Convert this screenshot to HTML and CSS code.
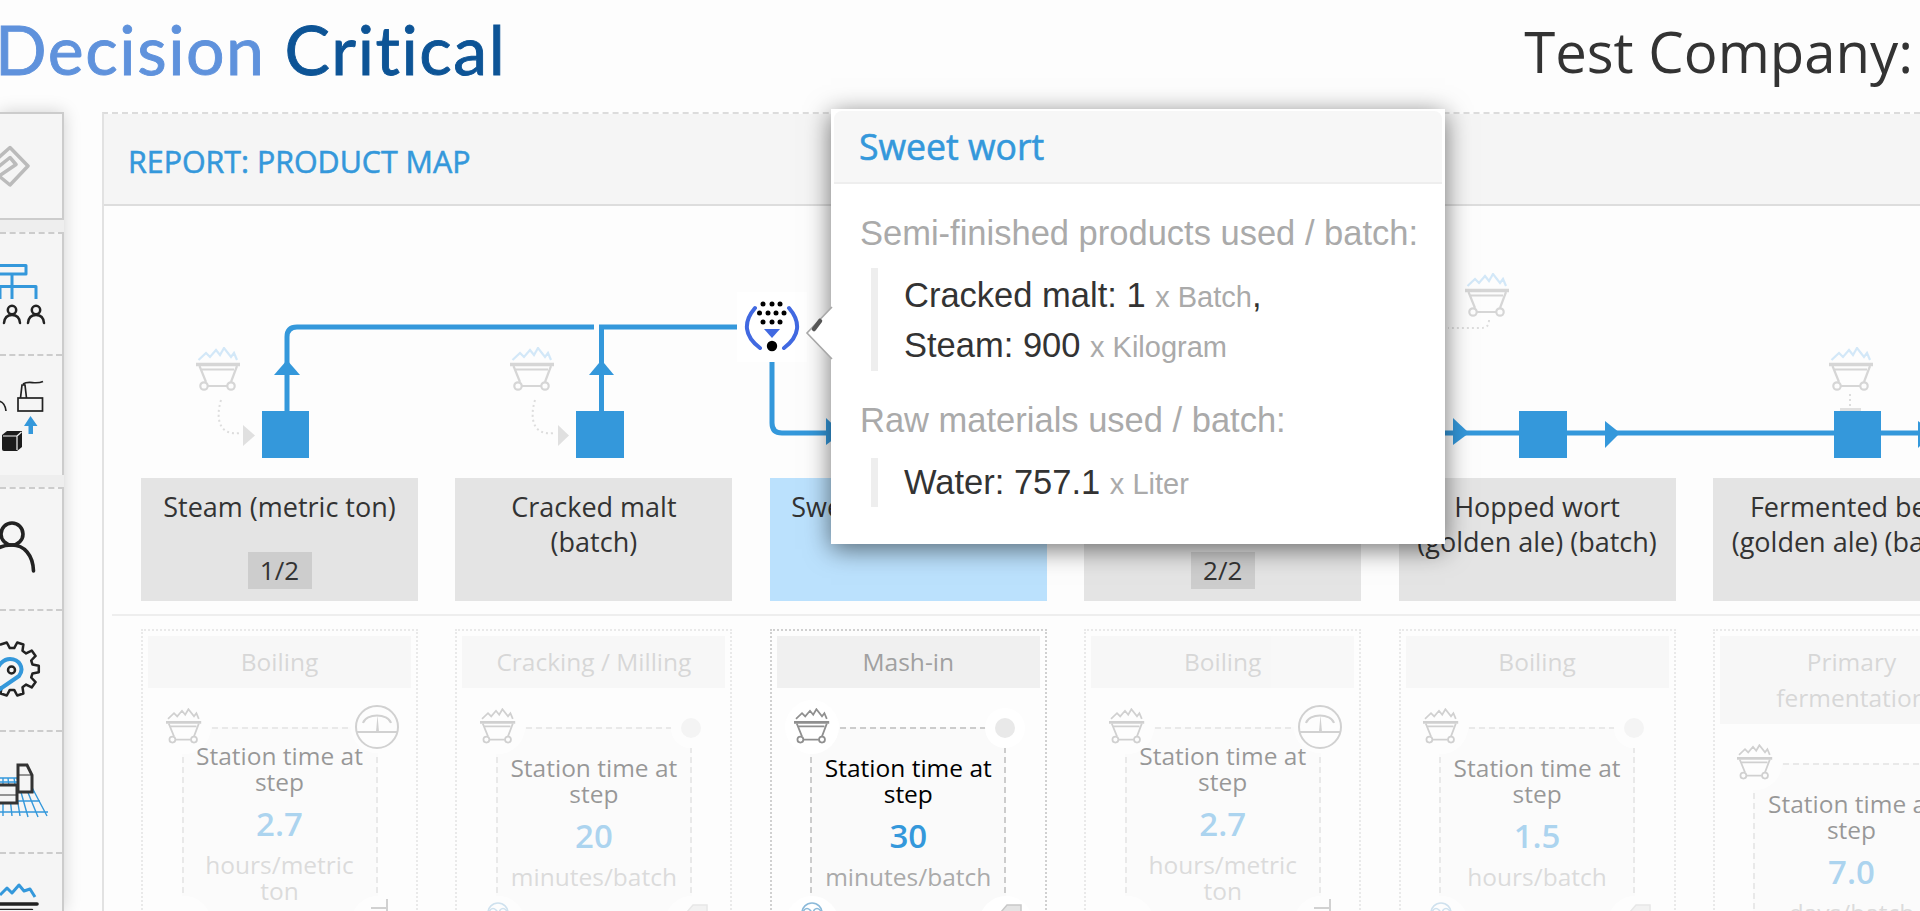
FILE: index.html
```html
<!DOCTYPE html>
<html lang="en">
<head>
<meta charset="utf-8">
<title>Report: Product Map</title>
<link rel="stylesheet" href="styles.css">
</head>
<body>
<svg class="defs" width="0" height="0" aria-hidden="true">
  <symbol id="cart" viewBox="0 0 45 44">
    <polyline class="cart-flame" points="2.5,13 10,6 14,10 20,3 24,8 28,1 35,10 38,6 41,13"/>
    <path class="cart-line-bold" d="M0 17.5H44"/>
    <path class="cart-line" d="M5 22.5H38M3.5 19L10 35M41 19L35 35M12 39H31"/>
    <circle class="cart-line" cx="8" cy="39" r="3.7"/>
    <circle class="cart-line" cx="35" cy="39" r="3.7"/>
  </symbol>
</svg>

<header class="topbar">
  <div class="logo"><span class="logo-light">Decision</span> <span class="logo-dark">Critical</span></div>
  <div class="company">Test Company:</div>
</header>

<div class="layout">
  <nav class="sidebar">
    <section class="nav-group nav-solid">
      <svg class="nav-icon" width="62" height="104" viewBox="0 114 62 104">
        <path class="ic-gray" d="M-3 159L10 147.500L28 166L10 185L-1 176L16 164.500L10 157.500L-3 168"/>
      </svg>
    </section>
    <section class="nav-group">
      <div class="nav-item">
        <svg class="nav-icon" width="62" height="120" viewBox="0 235 62 120">
          <path class="ic-blue" d="M-6 266.500H26V275H-6M12 275V300M-6 287.500H36V300M0 287.500V300"/>
          <circle class="ic-dark" cx="12" cy="311" r="4.200"/>
          <path class="ic-dark" d="M4 324C4.500 318 8 316 12 316S19.500 318 20 324"/>
          <circle class="ic-dark" cx="36" cy="311" r="4.200"/>
          <path class="ic-dark" d="M28 324C28.500 318 32 316 36 316S43.500 318 44 324"/>
        </svg>
      </div>
      <div class="nav-item nav-dashed">
        <svg class="nav-icon" width="62" height="119" viewBox="0 357 62 119">
          <rect class="ic-thin" x="18" y="399" width="24.500" height="13"/>
          <path class="ic-thin" d="M20.500 399L22 386H25L26.500 399M23 385C29 381 35 386 43 382.500M-2 402C3 402 5.500 407 6 412"/>
          <path class="ic-fill-blue" d="M30.500 417L37.500 427H33V435H28.500V427H24Z"/>
          <path class="ic-fill-dark" d="M2 436L7 432H22V448L17 452H4Q2 452 2 450Z"/>
          <path class="ic-light" d="M17 437V451M17 437L21.500 433M3 437H17"/>
        </svg>
      </div>
    </section>
    <section class="nav-group">
      <div class="nav-item">
        <svg class="nav-icon" width="62" height="120" viewBox="0 490 62 120">
          <circle class="ic-dark-bold" cx="12" cy="535" r="11"/>
          <path class="ic-dark-bold" d="M-15 568C-12 552 0 546 12 546C24 546 33 556 33.500 572"/>
        </svg>
      </div>
      <div class="nav-item nav-dashed">
        <svg class="nav-icon" width="62" height="119" viewBox="0 612 62 119">
          <path class="ic-dark" transform="translate(12 670)" d="M-10.500 18.200L-11.400 24.500L-5.200 26.500L-2.200 20.900L2.200 20.900L5.200 26.500L11.400 24.500L10.500 18.200L14.100 15.600L19.700 18.400L23.600 13.100L19.200 8.500L20.500 4.400L26.800 3.300V-3.300L20.500 -4.400L19.200 -8.500L23.600 -13.100L19.700 -18.400L14.100 -15.600L10.500 -18.200L11.400 -24.500L5.200 -26.500L2.200 -20.900H-2.200L-5.200 -26.500L-11.400 -24.500"/>
          <path class="ic-blue-pin" d="M-3 692L19 677C25 669 19 660 10 660C4 660 0 664 -3 670"/>
          <circle class="ic-dark" cx="11.500" cy="671" r="3.500"/>
        </svg>
      </div>
      <div class="nav-item nav-dashed">
        <svg class="nav-icon" width="62" height="120" viewBox="0 733 62 120">
          <path class="ic-blue-thin" d="M0 779H27M0 783H30M0 793H35M0 802H40M0 813H48M3 779V817M8 779L12 817M14 779L20 817M17 779L28 818M22 779L38 818M27 779L47 817"/>
          <path class="ic-box" d="M18 766H27L32 776V793H18Z"/>
          <path class="ic-box-thin" d="M18 776H32"/>
          <path class="ic-box" d="M-4 786H17V804H-4Z"/>
          <path class="ic-box-thin" d="M-4 796H17"/>
        </svg>
      </div>
      <div class="nav-item nav-dashed">
        <svg class="nav-icon" width="62" height="56" viewBox="0 855 62 56">
          <path class="ic-blue" d="M0 896L7 889L12 894L19 886L24 892L30 890L35 898"/>
          <path class="ic-dark-bold" d="M-4 905H37"/>
          <path class="ic-dark" d="M-4 911H32"/>
        </svg>
      </div>
    </section>
  </nav>

  <main class="panel">
    <div class="panel-head"><h1 class="panel-title">REPORT: PRODUCT MAP</h1></div>

    <svg class="flow" width="1816" height="272" viewBox="104 206 1816 272">
      <g class="flow-line">
        <path d="M287 411V337Q287 327 297 327H594M599 327H737"/>
        <path d="M601.500 411V325"/>
        <path d="M772 362V423Q772 433 782 433H1920"/>
      </g>
      <g class="flow-fill">
        <path d="M287 360L300 375H274Z"/>
        <path d="M601.500 360L614 375H589Z"/>
        <path d="M826 418L842 433L826 445Z"/>
        <path d="M1453 418L1469 433L1453 445Z"/>
        <path d="M1605 421L1620 433L1605 448Z"/>
        <path d="M1918 421L1933 433L1918 448Z"/>
        <rect x="262" y="411" width="47" height="47"/>
        <rect x="576" y="411" width="48" height="47"/>
        <rect x="1519" y="411" width="48" height="47"/>
        <rect x="1834" y="411" width="47" height="47"/>
      </g>
      <use class="cart-faint" href="#cart" x="196" y="347" width="45" height="44"/>
      <use class="cart-faint" href="#cart" x="510" y="347" width="45" height="44"/>
      <use class="cart-faint" href="#cart" x="1465" y="273" width="45" height="44"/>
      <use class="cart-faint" href="#cart" x="1829" y="347" width="45" height="44"/>
      <g class="flow-dots">
        <path d="M221 400C215 420 220 436 240 433"/>
        <path d="M535 400C529 420 534 436 554 433"/>
        <path d="M1489 320C1489 326 1486 328 1480 328H1448"/>
        <path d="M1850 394V407"/>
      </g>
      <g class="flow-gray">
        <path d="M243 425L255 435.500L243 446Z"/>
        <path d="M558 425L569 435.500L558 446Z"/>
        <rect x="1840" y="408" width="21" height="3"/>
      </g>
      <g>
        <rect class="icon-plate" x="737" y="292" width="70" height="70"/>
        <path class="mix-arc" d="M755 308C743 322 744 336 760 348M789 308C801 322 800 336 784 348"/>
        <g class="mix-dot">
          <circle cx="763" cy="304" r="2.500"/><circle cx="772" cy="304" r="2.500"/><circle cx="780" cy="304" r="2.500"/>
          <circle cx="759.500" cy="313" r="2.500"/><circle cx="768" cy="313" r="2.500"/><circle cx="776" cy="313" r="2.500"/><circle cx="784" cy="313" r="2.500"/>
          <circle cx="763" cy="322" r="2.500"/><circle cx="772" cy="322" r="2.500"/><circle cx="780" cy="322" r="2.500"/>
          <circle cx="772" cy="346" r="5.200"/>
        </g>
        <path class="mix-tri" d="M764 329H780L772 338Z"/>
      </g>
    </svg>

    <div class="cards">
      <div class="card"><span>Steam (metric ton)</span><span class="badge">1/2</span></div>
      <div class="card"><span>Cracked malt (batch)</span></div>
      <div class="card card-active"><span>Sweet wort (batch)</span></div>
      <div class="card"><span>Boiled wort (batch)</span><span class="badge">2/2</span></div>
      <div class="card"><span>Hopped wort (golden ale) (batch)</span></div>
      <div class="card"><span>Fermented beer (golden ale) (batch)</span></div>
    </div>

    <div class="divider"></div>

    <div class="steps">
      <article class="step step-dim">
        <div class="step-title">Boiling</div>
        <div class="frame frame-high">
          <svg class="corner corner-tl" width="54" height="54" viewBox="0 0 54 54"><circle class="plate" cx="27" cy="27" r="27"/><use class="cart-gray" href="#cart" x="9" y="8" width="36" height="36"/></svg>
          <svg class="corner corner-tr-gauge" width="52" height="52" viewBox="0 0 52 52"><circle class="plate" cx="26" cy="26" r="26"/><circle class="gauge" cx="26" cy="26" r="21"/><path class="gauge" d="M5 31H47M12 22C15 12 37 12 40 22"/><path class="gauge-fill" d="M25 31L26.500 14L28 31Z"/></svg>
          <p class="label">Station time at step</p>
          <p class="value">2.7</p>
          <p class="unit">hours/metric ton</p>
          <svg class="corner corner-bl" width="54" height="54" viewBox="0 0 54 54"><circle class="plate" cx="27" cy="27" r="27"/></svg>
          <svg class="corner corner-br" width="54" height="54" viewBox="0 0 54 54"><circle class="plate" cx="27" cy="27" r="27"/><path class="gauge" d="M20 12H36M36 3V20"/></svg>
        </div>
      </article>

      <article class="step step-dim">
        <div class="step-title">Cracking / Milling</div>
        <div class="frame">
          <svg class="corner corner-tl" width="54" height="54" viewBox="0 0 54 54"><circle class="plate" cx="27" cy="27" r="27"/><use class="cart-gray" href="#cart" x="9" y="8" width="36" height="36"/></svg>
          <svg class="corner corner-tr" width="40" height="40" viewBox="0 0 40 40"><circle class="plate" cx="20" cy="20" r="20"/><circle class="dot" cx="20" cy="20" r="10"/></svg>
          <p class="label">Station time at step</p>
          <p class="value">20</p>
          <p class="unit">minutes/batch</p>
          <svg class="corner corner-bl" width="54" height="54" viewBox="0 0 54 54"><circle class="plate" cx="27" cy="27" r="27"/><circle class="lens" cx="27" cy="17" r="10"/><path class="lens" d="M19 14Q22 11 25 14T23 17T19 14M29 14Q32 11 35 14T33 17T29 14"/></svg>
          <svg class="corner corner-br" width="54" height="54" viewBox="0 0 54 54"><circle class="plate" cx="27" cy="27" r="27"/><path class="doc" d="M22 16L28 9H42V26H22Z"/></svg>
        </div>
      </article>

      <article class="step">
        <div class="step-title">Mash-in</div>
        <div class="frame">
          <svg class="corner corner-tl" width="54" height="54" viewBox="0 0 54 54"><circle class="plate" cx="27" cy="27" r="27"/><use class="cart-gray" href="#cart" x="9" y="8" width="36" height="36"/></svg>
          <svg class="corner corner-tr" width="40" height="40" viewBox="0 0 40 40"><circle class="plate" cx="20" cy="20" r="20"/><circle class="dot" cx="20" cy="20" r="10"/></svg>
          <p class="label">Station time at step</p>
          <p class="value">30</p>
          <p class="unit">minutes/batch</p>
          <svg class="corner corner-bl" width="54" height="54" viewBox="0 0 54 54"><circle class="plate" cx="27" cy="27" r="27"/><circle class="lens" cx="27" cy="17" r="10"/><path class="lens" d="M19 14Q22 11 25 14T23 17T19 14M29 14Q32 11 35 14T33 17T29 14"/></svg>
          <svg class="corner corner-br" width="54" height="54" viewBox="0 0 54 54"><circle class="plate" cx="27" cy="27" r="27"/><path class="doc" d="M22 16L28 9H42V26H22Z"/></svg>
        </div>
      </article>

      <article class="step step-dim">
        <div class="step-title">Boiling</div>
        <div class="frame frame-high">
          <svg class="corner corner-tl" width="54" height="54" viewBox="0 0 54 54"><circle class="plate" cx="27" cy="27" r="27"/><use class="cart-gray" href="#cart" x="9" y="8" width="36" height="36"/></svg>
          <svg class="corner corner-tr-gauge" width="52" height="52" viewBox="0 0 52 52"><circle class="plate" cx="26" cy="26" r="26"/><circle class="gauge" cx="26" cy="26" r="21"/><path class="gauge" d="M5 31H47M12 22C15 12 37 12 40 22"/><path class="gauge-fill" d="M25 31L26.500 14L28 31Z"/></svg>
          <p class="label">Station time at step</p>
          <p class="value">2.7</p>
          <p class="unit">hours/metric ton</p>
          <svg class="corner corner-bl" width="54" height="54" viewBox="0 0 54 54"><circle class="plate" cx="27" cy="27" r="27"/></svg>
          <svg class="corner corner-br" width="54" height="54" viewBox="0 0 54 54"><circle class="plate" cx="27" cy="27" r="27"/><path class="gauge" d="M20 12H36M36 3V20"/></svg>
        </div>
      </article>

      <article class="step step-dim">
        <div class="step-title">Boiling</div>
        <div class="frame">
          <svg class="corner corner-tl" width="54" height="54" viewBox="0 0 54 54"><circle class="plate" cx="27" cy="27" r="27"/><use class="cart-gray" href="#cart" x="9" y="8" width="36" height="36"/></svg>
          <svg class="corner corner-tr" width="40" height="40" viewBox="0 0 40 40"><circle class="plate" cx="20" cy="20" r="20"/><circle class="dot" cx="20" cy="20" r="10"/></svg>
          <p class="label">Station time at step</p>
          <p class="value">1.5</p>
          <p class="unit">hours/batch</p>
          <svg class="corner corner-bl" width="54" height="54" viewBox="0 0 54 54"><circle class="plate" cx="27" cy="27" r="27"/><circle class="lens" cx="27" cy="17" r="10"/><path class="lens" d="M19 14Q22 11 25 14T23 17T19 14M29 14Q32 11 35 14T33 17T29 14"/></svg>
          <svg class="corner corner-br" width="54" height="54" viewBox="0 0 54 54"><circle class="plate" cx="27" cy="27" r="27"/><path class="doc" d="M22 16L28 9H42V26H22Z"/></svg>
        </div>
      </article>

      <article class="step step-dim">
        <div class="step-title">Primary fermentation</div>
        <div class="frame">
          <svg class="corner corner-tl" width="54" height="54" viewBox="0 0 54 54"><circle class="plate" cx="27" cy="27" r="27"/><use class="cart-gray" href="#cart" x="9" y="8" width="36" height="36"/></svg>
          <svg class="corner corner-tr" width="40" height="40" viewBox="0 0 40 40"><circle class="plate" cx="20" cy="20" r="20"/><circle class="dot" cx="20" cy="20" r="10"/></svg>
          <p class="label">Station time at step</p>
          <p class="value">7.0</p>
          <p class="unit">days/batch</p>
        </div>
      </article>
    </div>
  </main>
</div>

<aside class="popover">
  <svg class="popover-arrow" width="40" height="54" viewBox="0 0 40 54">
    <path class="arrow-shape" d="M26 0L1 26L26 52"/>
    <path class="arrow-mark" d="M8 22L14 14"/>
  </svg>
  <div class="popover-head"><h2 class="popover-title">Sweet wort</h2></div>
  <div class="popover-body">
    <h3 class="popover-heading">Semi-finished products used / batch:</h3>
    <blockquote class="popover-list">
      <div>Cracked malt: 1 <small>x Batch</small>,</div>
      <div>Steam: 900 <small>x Kilogram</small></div>
    </blockquote>
    <h3 class="popover-heading popover-heading-next">Raw materials used / batch:</h3>
    <blockquote class="popover-list popover-list-single">
      <div>Water: 757.1 <small>x Liter</small></div>
    </blockquote>
  </div>
</aside>
</body>
</html>
```

FILE: styles.css
```css
* { box-sizing: border-box; }

html, body {
  margin: 0;
  height: 911px;
  overflow: hidden;
}

body {
  background: #fdfdfd;
  color: #333;
  font-family: "Open Sans", "Noto Sans", sans-serif;
  position: relative;
}

.defs { display: block; height: 0; }

/* Header */
.topbar {
  height: 112px;
  display: flex;
  align-items: flex-start;
  justify-content: space-between;
  padding-right: 7px;
}

.logo {
  font-family: "Lato", sans-serif;
  font-size: 68px;
  line-height: 82px;
  letter-spacing: 1.55px;
  margin-left: -5px;
  margin-top: 8px;
  white-space: nowrap;
  -webkit-text-stroke: .9px currentColor;
}
.logo-light { color: #5f92dc; }
.logo-dark { color: #0d5496; }

.company {
  font-size: 56.3px;
  line-height: 76px;
  margin-top: 13px;
  color: #333;
}

/* Layout */
.layout {
  display: flex;
  height: 799px;
  gap: 38px;
}

/* Sidebar */
.sidebar {
  flex: 0 0 64px;
  display: flex;
  flex-direction: column;
  background: #eee;
  box-shadow: 0 0 16px rgba(0, 0, 0, .18);
  gap: 12px;
}

.nav-group {
  background: #f5f5f5;
  border-right: 2px solid #ccc;
  border-top: 2px dashed #ccc;
}
.nav-group:last-child { flex: 1; }

.nav-solid { border: 2px solid #ccc; border-left: 0; }
.nav-dashed { border-top: 2px dashed #ccc; }
.nav-icon { display: block; overflow: hidden; }

.ic-gray { fill: none; stroke: #bbb; stroke-width: 3.5; stroke-linejoin: round; stroke-linecap: round; }
.ic-blue { fill: none; stroke: #3498db; stroke-width: 3; stroke-linejoin: round; }
.ic-blue-pin { fill: none; stroke: #3498db; stroke-width: 4; stroke-linejoin: round; }
.ic-blue-thin { fill: none; stroke: #3498db; stroke-width: 1.4; }
.ic-dark { fill: none; stroke: #222; stroke-width: 2.500; stroke-linecap: round; stroke-linejoin: round; }
.ic-dark-bold { fill: none; stroke: #222; stroke-width: 3.6; stroke-linecap: round; }
.ic-thin { fill: none; stroke: #222; stroke-width: 1.7; }
.ic-fill-blue { fill: #3498db; }
.ic-fill-dark { fill: #1c1c1c; }
.ic-light { fill: none; stroke: #f5f5f5; stroke-width: 1.2; }
.ic-box { fill: #f5f5f5; stroke: #333; stroke-width: 3; }
.ic-box-thin { fill: none; stroke: #333; stroke-width: 1; }

/* Panel */
.panel {
  flex: 1;
  min-width: 0;
  border-left: 2px solid #e2e2e2;
  border-top: 2px dashed #dcdcdc;
  overflow: hidden;
}

.panel-head {
  height: 92px;
  background: #f5f5f5;
  border-bottom: 2px solid #ddd;
  display: flex;
  align-items: center;
  padding: 4px 0 0 24px;
}

.panel-title {
  margin: 0;
  font-size: 30.4px;
  font-weight: 400;
  -webkit-text-stroke: .55px currentColor;
  color: #3498db;
  white-space: nowrap;
}

.flow { display: block; }
.flow-line path { fill: none; stroke: #3498db; stroke-width: 5; }
.flow-fill { fill: #3498db; }
.flow-dots path { fill: none; stroke: #ddd; stroke-width: 2; stroke-dasharray: 2 3; }
.flow-gray { fill: #e0e0e0; }
.icon-plate { fill: #fff; }
.mix-arc { fill: none; stroke: #4169e1; stroke-width: 4; stroke-linecap: round; }
.mix-dot { fill: #000; }
.mix-tri { fill: #4169e1; }

.cart-flame { fill: none; stroke: var(--flame, #d0d0d0); stroke-width: 2.2; }
.cart-line { fill: none; stroke: currentColor; stroke-width: 2.2; }
.cart-line-bold { fill: none; stroke: currentColor; stroke-width: 3.5; }
.cart-faint { color: #d6d6d6; --flame: #d3e8f8; }
.cart-gray { color: #8f8f8f; --flame: #8f8f8f; }

/* Cards */
.cards, .steps {
  display: flex;
  gap: 37.4px;
  padding-left: 37px;
}

.card {
  flex: 0 0 277px;
  height: 123px;
  background: #e4e4e4;
  display: flex;
  flex-direction: column;
  align-items: center;
  padding: 11px 16px 12px;
  font-size: 27px;
  line-height: 35px;
  text-align: center;
  color: #333;
}
.card-active { background: #bbe1fd; }

.badge {
  margin-top: auto;
  width: 64px;
  height: 37px;
  line-height: 36px;
  background: #cdcdcd;
  font-size: 26px;
}

.divider {
  height: 2px;
  margin: 13px 0;
  margin-left: 8px;
  background: #eee;
}

/* Steps */
.step {
  flex: 0 0 277px;
  height: 400px;
  border: 2px dotted #d0d0d0;
  padding: 5px;
}
.step-dim { border-color: #e9e9e9; }
.step-dim > * { opacity: .4; }

.step-title {
  background: #f0f0f0;
  color: #a0a0a0;
  font-size: 24.5px;
  line-height: 36px;
  padding: 8px 10px;
  text-align: center;
}

.frame {
  position: relative;
  width: 196px;
  height: 196px;
  margin: 39px auto 0;
  padding: 26px 6px 0;
  background: #fafafa;
  border: 2px dashed #ccc;
  text-align: center;
}
.frame-high { padding-top: 14px; }

.label, .value, .unit { margin: 0; }
.label { font-size: 24.5px; line-height: 26px; color: #000; }
.value { font-size: 33px; line-height: 44px; font-weight: 600; color: #3498db; margin-top: 7px; }
.unit { font-size: 24.5px; line-height: 26px; color: #aaa; margin-top: 6px; }

.corner { position: absolute; display: block; overflow: visible; }
.corner-tl { left: -27px; top: -29px; }
.corner-tr { right: -21px; top: -21px; }
.corner-tr-gauge { right: -27px; top: -28px; }
.corner-bl { left: -27px; bottom: -29px; }
.corner-br { right: -29px; bottom: -29px; }

.plate { fill: #fff; }
.dot { fill: #e9e9e9; }
.gauge { fill: none; stroke: #909090; stroke-width: 2; }
.gauge-fill { fill: #909090; }
.lens { fill: none; stroke: #8bb9d9; stroke-width: 1.6; }
.doc { fill: #e4e4e4; stroke: #c8c8c8; stroke-width: 1.5; }

/* Popover */
.popover {
  position: absolute;
  left: 831px;
  top: 109px;
  width: 614px;
  height: 435px;
  background: #fff;
  box-shadow: 0 5px 24px rgba(0, 0, 0, .55);
  font-family: "Liberation Sans", Arial, sans-serif;
  padding: 2px 3px;
}

.popover-arrow {
  position: absolute;
  left: -25px;
  top: 198px;
  overflow: visible;
}
.arrow-shape { fill: #fff; stroke: #a8a8a8; stroke-width: 1.6; }
.arrow-mark { fill: none; stroke: #555; stroke-width: 4.500; stroke-linecap: round; }

.popover-head {
  height: 73px;
  background: #f7f7f7;
  border-bottom: 2px solid #eee;
  border-radius: 8px 8px 0 0;
  padding: 0 0 2px 25px;
  display: flex;
  align-items: center;
}

.popover-title {
  margin: 0;
  font-family: "Open Sans", sans-serif;
  font-size: 35.6px;
  font-weight: 400;
  -webkit-text-stroke: .6px currentColor;
  color: #3498db;
}

.popover-body { padding: 29px 0 0 26px; }

.popover-heading {
  margin: 0 0 15px;
  font-size: 34.5px;
  line-height: 40px;
  font-weight: 400;
  color: #aaa;
  white-space: nowrap;
}
.popover-heading-next { margin-top: 29px; margin-bottom: 18px; }

.popover-list {
  margin: 0 0 0 11px;
  border-left: 7px solid #eee;
  padding: 3px 0 0 26px;
  font-size: 34.5px;
  line-height: 48px;
  color: #333;
}
.popover-list small { font-size: 29px; color: #aaa; }
.popover-list-single { padding-top: 0; height: 49px; }
```
